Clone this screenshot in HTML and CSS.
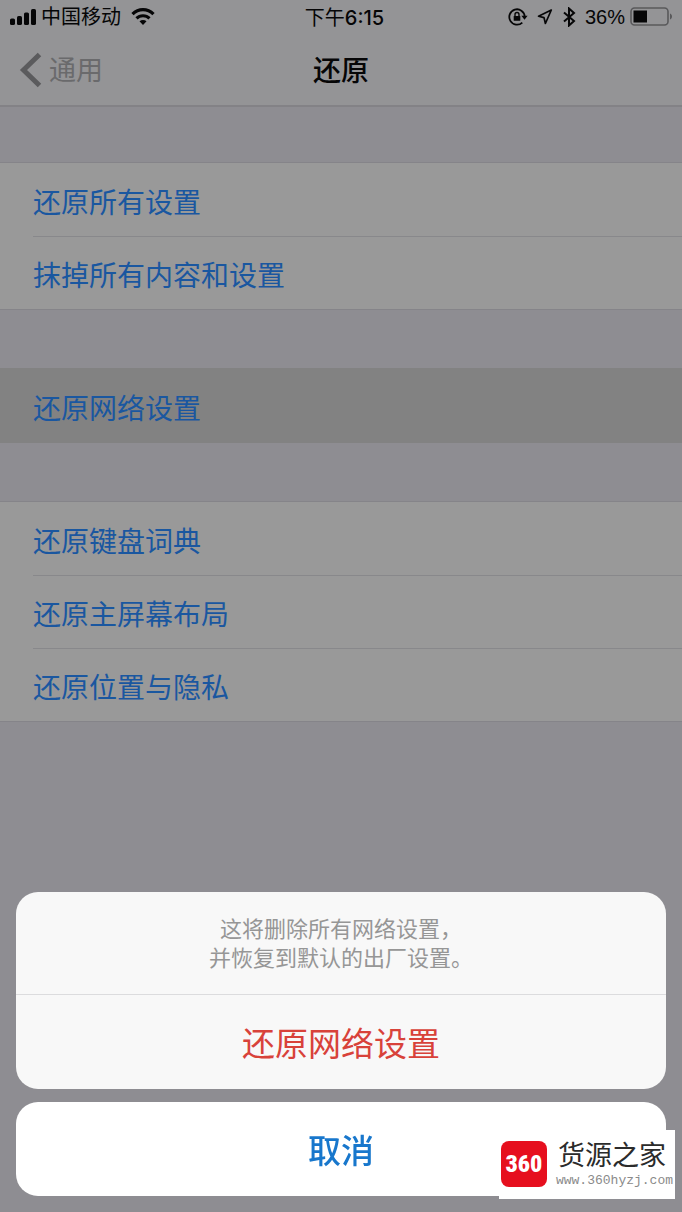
FILE: index.html
```html
<!DOCTYPE html>
<html lang="zh-CN">
<head>
  <meta charset="UTF-8" />
  <meta name="viewport" content="width=device-width, initial-scale=1.0"/>
  <title>还原</title>
  <link rel="stylesheet" href="styles.css">
</head>
<body>
  <header class="top">
    <div class="status-bar">
      <div class="status-left">
        <svg class="signal" width="28" height="18" viewBox="0 0 28 18" aria-hidden="true">
          <rect x="1" y="10.5" width="5" height="6.5" rx="1.6"/>
          <rect x="8" y="8" width="5" height="9" rx="1.6"/>
          <rect x="15" y="4.5" width="5" height="12.5" rx="1.6"/>
          <rect x="22" y="1" width="5" height="16" rx="1.6"/>
        </svg>
        <span>中国移动</span>
        <svg class="wifi" width="24" height="18" viewBox="0 0 24 18" aria-hidden="true">
          <path d="M1.5 6.2C7.5.2 16.5.2 22.5 6.2" fill="none" stroke="#060607" stroke-width="3.2"/>
          <path d="M5.5 10.4C9 6.8 15 6.8 18.5 10.4" fill="none" stroke="#060607" stroke-width="3"/>
          <path d="M8.5 13.3C10.5 11.5 13.5 11.5 15.5 13.3L12 17Z"/>
        </svg>
      </div>
      <div class="status-time">下午<span>6:15</span></div>
      <div class="status-right">
        <svg width="20" height="18" viewBox="0 0 20 18" aria-hidden="true">
          <path d="M14.3 14.6A7.7 7.7 0 1 1 16.7 8.5" fill="none" stroke="#060607" stroke-width="1.8"/>
          <path d="M13.4 7.8H19.6L16.5 11.8Z"/>
          <rect x="5.7" y="8" width="6.6" height="4.8" rx=".6"/>
          <path d="M7 8V6.5a2 2 0 0 1 4 0V8" fill="none" stroke="#060607" stroke-width="1.4"/>
        </svg>
        <svg width="16" height="18" viewBox="0 0 16 18" aria-hidden="true">
          <path d="M14.3 2L1.5 8.2L7 9.6L8.400 15.500Z" fill="none" stroke="#060607" stroke-width="1.7" stroke-linejoin="round"/>
        </svg>
        <svg width="14" height="20" viewBox="0 0 14 20" aria-hidden="true">
          <path d="M2 5.5L12 14L7 18.5V1.5L12 6L2 14.5" fill="none" stroke="#060607" stroke-width="2"/>
        </svg>
        <span class="percent">36%</span>
        <svg class="battery" width="44" height="20" viewBox="0 0 44 20" aria-hidden="true">
          <rect x="1" y="1" width="37" height="17" rx="3.5" fill="none" stroke="#59595b" stroke-width="1.6"/>
          <rect x="3.5" y="3.5" width="13.5" height="12"/>
          <path d="M40 6.5c2.7 1 2.7 5 0 6Z" fill="#59595b"/>
        </svg>
      </div>
    </div>
    <nav class="nav-bar">
      <a class="back" href="#">
        <svg width="24" height="36" viewBox="0 0 24 36" aria-hidden="true">
          <path d="M20.5 2.5L4.5 18L20.5 33.5" fill="none" stroke="#5b5b5d" stroke-width="5"/>
        </svg>
        <span>通用</span>
      </a>
      <h1>还原</h1>
    </nav>
  </header>

  <main class="settings">
    <div class="group">
      <button class="row">还原所有设置</button>
      <button class="row">抹掉所有内容和设置</button>
    </div>
    <div class="group selected">
      <button class="row">还原网络设置</button>
    </div>
    <div class="group">
      <button class="row">还原键盘词典</button>
      <button class="row">还原主屏幕布局</button>
      <button class="row">还原位置与隐私</button>
    </div>
  </main>

  <div class="action-sheet" role="dialog" aria-labelledby="sheet-message">
    <div class="sheet-card">
      <p id="sheet-message">这将删除所有网络设置，<br>并恢复到默认的出厂设置。</p>
      <button class="sheet-btn destructive">还原网络设置</button>
    </div>
    <button class="sheet-btn cancel">取消</button>
  </div>

  <div class="watermark">
    <div class="logo">360</div>
    <div class="brand">
      <div class="brand-name">货源之家</div>
      <div class="brand-url">www.360hyzj.com</div>
    </div>
  </div>
</body>
</html>
```

FILE: styles.css
```css
* {
  box-sizing: border-box;
}

body {
  margin: 0;
  min-height: 100vh;
  background: #8e8d92;
  color: #060607;
  font-family: "Inter", "Noto Sans CJK SC", sans-serif;
}

button {
  font-family: inherit;
  border: none;
  cursor: pointer;
}

svg {
  display: block;
  flex: none;
  fill: #060607;
}

/* status bar and title */
.top {
  background: #949496;
  border-bottom: 2px solid #838286;
}

.status-bar {
  display: grid;
  grid-template-columns: 1fr auto 1fr;
  align-items: center;
  height: 34px;
  padding: 0 8px 0 9px;
  font-size: 20px;
  line-height: 24px;
}

.status-left,
.status-right {
  display: flex;
  align-items: center;
}

.status-left {
  gap: 4px;
}

.wifi {
  margin-left: 6px;
}

.status-time {
  padding: 2px 0 0 6px;
}

.status-time span {
  font-weight: 500;
}

.status-right {
  justify-content: flex-end;
  gap: 9px;
}

.percent {
  font-family: "Liberation Sans", sans-serif;
}

.battery {
  margin-left: -4px;
}

.nav-bar {
  display: grid;
  grid-template-columns: 1fr auto 1fr;
  align-items: center;
  height: 71px;
  padding: 0 19px;
}

.back {
  display: flex;
  align-items: center;
  gap: 6px;
  color: #6a6a6c;
  font-size: 27px;
  line-height: 36px;
  text-decoration: none;
}

.back span,
h1 {
  padding-top: 2px;
}

h1 {
  margin: 0;
  font-size: 28px;
  font-weight: 500;
  line-height: 36px;
}

/* list */
.settings {
  padding-top: 55px;
}

.group {
  margin-bottom: 58px;
  padding-left: 33px;
  background: #999;
  border-top: 1px solid #858489;
  border-bottom: 1px solid #858489;
}

.row {
  display: block;
  width: 100%;
  height: 73px;
  padding: 2px 0 0;
  background: none;
  color: #1a57a0;
  font-size: 28px;
  text-align: left;
}

.row + .row {
  border-top: 1px solid #88888b;
}

.selected {
  background: #828282;
  border-color: #828282;
}

/* action sheet */
.action-sheet {
  position: fixed;
  left: 16px;
  right: 16px;
  bottom: 16px;
}

.sheet-card {
  margin-bottom: 13px;
  background: #f8f8f8;
  border-radius: 22px;
  overflow: hidden;
}

.sheet-card p {
  margin: 0;
  padding: 23px 20px 21px;
  border-bottom: 1px solid #dcdcde;
  color: #969696;
  font-size: 22px;
  line-height: 29px;
  text-align: center;
}

.sheet-btn {
  display: block;
  width: 100%;
  height: 94px;
  padding: 0;
  background: none;
  font-size: 33px;
}

.destructive {
  color: #d8423a;
}

.cancel {
  background: #fff;
  border-radius: 22px;
  color: #1877cc;
  font-weight: 500;
}

/* site mark in the corner */
.watermark {
  position: fixed;
  right: 7px;
  bottom: 13px;
  display: flex;
  align-items: center;
  gap: 9px;
  padding: 7px 2px 8px;
  background: #fff;
}

.logo {
  display: flex;
  align-items: center;
  justify-content: center;
  width: 46px;
  height: 46px;
  background: #e60f1e;
  border-radius: 8px;
  color: #fff;
  font-family: "Roboto Condensed", "Roboto", sans-serif;
  font-size: 24px;
  font-weight: 900;
}

.brand-name {
  padding-left: 2px;
  color: #2b2b2b;
  font-family: "Noto Sans CJK SC", sans-serif;
  font-size: 27px;
  line-height: 34px;
}

.brand-url {
  color: #8a8a8a;
  font-family: "Liberation Mono", monospace;
  font-size: 13px;
  line-height: 20px;
}
```
